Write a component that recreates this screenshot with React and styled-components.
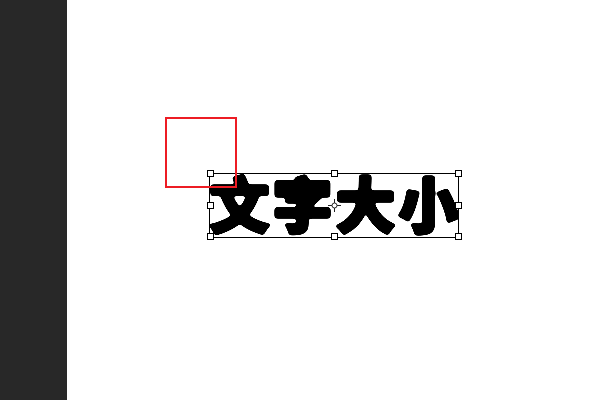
import React from 'react';
import styled, { createGlobalStyle } from 'styled-components';

const GlobalStyle = createGlobalStyle`
  html, body {
    margin: 0;
    padding: 0;
    background: #fff;
  }
`

const HANDLES = [
    [0, 0], [50, 0], [100, 0],
    [0, 50], [100, 50],
    [0, 100], [50, 100], [100, 100],
];

const App = () => <Page>
    <GlobalStyle />
    <FilterDefs aria-hidden="true">
        <filter id="soften" x="-5%" y="-5%" width="110%" height="110%">
            <feGaussianBlur stdDeviation="1.5" />
            <feComponentTransfer>
                <feFuncA type="linear" slope="9" intercept="-3" />
            </feComponentTransfer>
        </filter>
    </FilterDefs>
    <Sidebar />
    <Canvas>
        <TextFrame>
            <Title>文字大小</Title>
            {HANDLES.map(([x, y]) => <Handle key={`${x}-${y}`} $x={x} $y={y} />)}
            <Pivot viewBox="0 0 13 13">
                <circle cx="6.5" cy="6.5" r="4.5" fill="#fff" />
                <circle cx="6.5" cy="6.5" r="2.5" fill="none" stroke="#222" strokeWidth="1" />
                <path d="M6.5 0V4M6.5 9V13M0 6.5H4M9 6.5H13" stroke="#222" strokeWidth="1" />
            </Pivot>
        </TextFrame>
        <RedBox />
    </Canvas>
</Page>;

const FilterDefs = styled.svg`
  position: absolute;
  width: 0;
  height: 0;
`

const Page = styled.div`
  display: flex;
  width: 600px;
  height: 400px;
  overflow: hidden;
`

const Sidebar = styled.aside`
  width: 67px;
  flex: none;
  background-color: #282828;
`

const Canvas = styled.main`
  position: relative;
  flex: 1;
  background-color: #fff;
`

const RedBox = styled.div`
  position: absolute;
  left: 98px;
  top: 117px;
  width: 68px;
  height: 67px;
  border: 2px solid #ed1c24;
`

const TextFrame = styled.div`
  position: absolute;
  left: 142px;
  top: 173px;
  width: 248px;
  height: 63px;
  border: 1px solid #000;
  display: flex;
  align-items: center;
  justify-content: center;
`

const Title = styled.span`
  font-family: "Noto Sans CJK SC", sans-serif;
  font-weight: 900;
  font-size: 60px;
  line-height: 1;
  letter-spacing: 3px;
  padding: 0 0 7px 3px;
  white-space: nowrap;
  color: #000;
  -webkit-text-stroke: 2.5px #000;
  paint-order: stroke fill;
  filter: url(#soften);
`

const Handle = styled.i`
  position: absolute;
  left: ${props => props.$x}%;
  top: ${props => props.$y}%;
  margin: -4px 0 0 -3.5px;
  width: 7px;
  height: 7px;
  box-sizing: border-box;
  background-color: #fff;
  border: 1px solid #000;
`

const Pivot = styled.svg`
  position: absolute;
  left: 50%;
  top: 50%;
  margin: -6.5px 0 0 -6.5px;
  width: 13px;
  height: 13px;
`

export default App;
